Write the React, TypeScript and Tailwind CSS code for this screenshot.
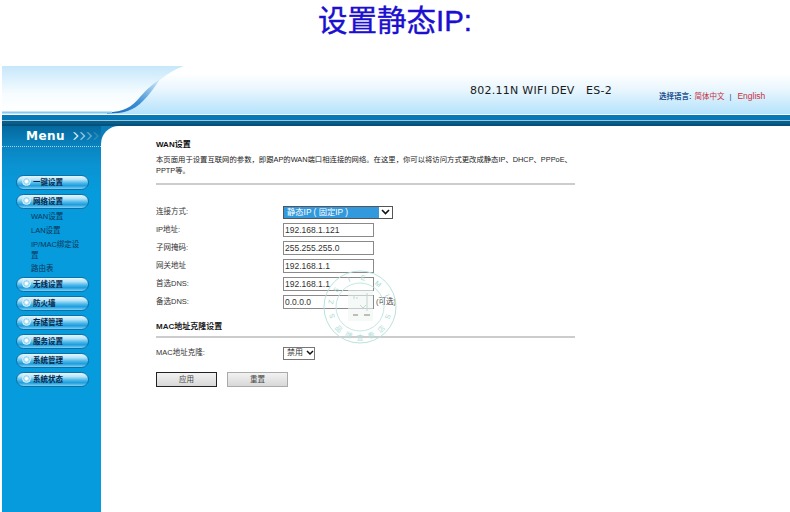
const sans = "font-['Liberation_Sans','Noto_Sans_CJK_SC',sans-serif]";

function NavPill({ label }: { label: string }) {
  return (
    <div className="relative flex h-[15px] w-[73px] items-center rounded-full border border-[#0b6fa8] bg-[linear-gradient(to_bottom,#e8f7fe_0%,#b4e3f8_28%,#4ab8ea_55%,#1c9cdd_75%,#7fd0f2_100%)] pl-[16px]">
      <span className="absolute left-[5px] top-[1px] h-[9px] w-[9px] rounded-full border border-[#d9f2fc] bg-[radial-gradient(circle,#ffffff_20%,#8fd4f3_55%,#d4f0fb_100%)]" />
      <span className="text-[7.5px] font-bold leading-none text-[#07264a]">{label}</span>
    </div>
  );
}

function SubLink({ children }: { children: React.ReactNode }) {
  return <div className="pl-[15px] text-[7.5px] leading-[11px] text-[#0a3558]">{children}</div>;
}

function Sidebar() {
  return (
    <aside className="flex w-[99px] shrink-0 flex-col bg-[linear-gradient(to_bottom,#06699f_0px,#0a86c2_22px,#0a93d2_40px,#069bdc_64px)]">
      <div className="flex h-[20px] items-center gap-[8px] pl-[24px] font-['DejaVu_Sans',sans-serif] text-[12px] font-bold tracking-[0.5px] text-white">
        Menu
        <svg width="29" height="10" viewBox="0 0 29 10">
          {[1, 0.7, 0.45, 0.2].map((opacity, i) => (
            <path key={i} d={`M${i * 7} 1l4 4-4 4h2l4-4-4-4z`} fill="#cfeaf6" opacity={opacity} />
          ))}
        </svg>
      </div>
      <div className="border-t border-dotted border-[#9fd6ee]" />
      <div className="flex flex-col pl-[14px] pt-[28px]">
        <div className="flex flex-col gap-[4px]">
          <NavPill label="一键设置" />
          <NavPill label="网络设置" />
        </div>
        <div className="flex w-[68px] flex-col gap-[3px] pb-[3px] pt-[2px]">
          <SubLink>WAN设置</SubLink>
          <SubLink>LAN设置</SubLink>
          <div className="-mb-[1px]"><SubLink>IP/MAC绑定设置</SubLink></div>
          <SubLink>路由表</SubLink>
        </div>
        <div className="flex flex-col gap-[4px]">
          {["无线设置", "防火墙", "存储管理", "服务设置", "系统管理", "系统状态"].map((item) => (
            <NavPill key={item} label={item} />
          ))}
        </div>
      </div>
    </aside>
  );
}

function Row({ label, children }: { label: string; children: React.ReactNode }) {
  return (
    <div className="flex h-[18px] items-center">
      <label className="w-[127px] text-[7.5px] text-[#333]">{label}</label>
      {children}
    </div>
  );
}

function Field({ value }: { value: string }) {
  return (
    <input
      readOnly
      value={value}
      className={`h-[14px] w-[91px] border border-[#8a8a8a] bg-transparent px-[1px] text-[8.5px] text-[#333] outline-none ${sans}`}
    />
  );
}

const ringLetters: [string, number][] = [
  ["S", -108], ["Z", -80], ["5", -54], ["I", -22], ["E", 6], ["M", 38], ["I", 67], ["S", 109],
];
const ringChars: [string, number][] = [
  ["品", 44], ["牌", 22], ["查", 0], ["看", -22], ["店", -44],
];

function Stamp() {
  return (
    <svg className="pointer-events-none absolute left-[322px] top-[270px]" width="76" height="76" viewBox="0 0 76 76">
      <circle cx="38" cy="37" r="36" fill="none" stroke="#b9e3dc" strokeWidth="1" />
      <circle cx="38" cy="37" r="24" fill="none" stroke="#c4e8e2" strokeWidth="1" />
      {ringLetters.map(([ch, angle], i) => (
        <text key={i} x="38" y="10" textAnchor="middle" fontSize="7" fill="#9fd8cf" transform={`rotate(${angle} 38 37)`} className="font-['Liberation_Sans',sans-serif]">
          {ch}
        </text>
      ))}
      {ringChars.map(([ch, angle]) => (
        <text key={ch} x="38" y="70" textAnchor="middle" fontSize="7" fill="#b3e0d9" transform={`rotate(${angle} 38 37)`} className="font-['Noto_Sans_CJK_SC',sans-serif]">
          {ch}
        </text>
      ))}
      <rect x="26" y="20" width="25" height="31" fill="#eef5f3" opacity="0.6" />
      <path d="M32 25v4M35 27v2M45 23v18M38 35l3 3 3-3" stroke="#c4d4d2" strokeWidth="1" fill="none" />
      <path d="M31 45h5M42 45h6" stroke="#c0bdb4" strokeWidth="2" />
    </svg>
  );
}

export default function App() {
  return (
    <div className={`relative h-[512px] w-[790px] overflow-hidden bg-white ${sans}`}>
      <h1 className="flex h-[66px] items-start justify-center pt-[2px] text-[29.5px] leading-[38px] text-[#1b0fd0] [-webkit-text-stroke:0.4px_#1b0fd0]">
        设置静态IP:
      </h1>

      <div className="pl-[2px]">
        <header className="relative flex h-[48px] bg-[linear-gradient(to_bottom,#ffffff_15%,#e8f6fe_50%,#b4e2fb_100%)]">
          <svg className="absolute left-0 top-0" width="190" height="48" viewBox="0 0 190 48">
            <defs>
              <linearGradient id="left-fill" x1="0" y1="0" x2="0" y2="1">
                <stop offset="0" stopColor="#c6e7fb" />
                <stop offset="0.6" stopColor="#f6fcff" />
                <stop offset="1" stopColor="#ffffff" />
              </linearGradient>
              <linearGradient id="swoosh" x1="0" y1="1" x2="1" y2="0">
                <stop offset="0" stopColor="#1668bd" />
                <stop offset="0.45" stopColor="#3d8fd4" />
                <stop offset="1" stopColor="#d4ecfa" />
              </linearGradient>
            </defs>
            <path d="M0 0H182C165 6 150 20 138 32C128 42 120 46 108 46H0Z" fill="url(#left-fill)" />
            <path d="M105 46.5C122 46 130 41 138 31C145 23 151 18 158 13C153 21 147 29 141 35C131 45 122 47.5 105 47.5Z" fill="url(#swoosh)" />
            <rect x="0" y="45.5" width="110" height="1.5" fill="#8cc6ec" />
          </svg>
          <div className="absolute left-[468px] top-[18px] whitespace-pre font-['DejaVu_Sans',sans-serif] text-[11px] leading-[14px] tracking-[0.27px] text-[#1a1a1a]">
            802.11N WIFI DEV   ES-2
          </div>
          <div className="absolute left-[657px] top-[25px] flex items-center text-[7.5px] leading-[11px]">
            <span className="font-bold text-[#1d4f8f]">选择语言:</span>
            <span className="ml-[3px] text-[#c8303a]">简体中文</span>
            <span className="ml-[5px] text-[#1d4f8f]">|</span>
            <span className="ml-[6px] text-[8.5px] text-[#c8303a]">English</span>
          </div>
        </header>

        <div className="flex h-[12px] flex-col">
          <div className="h-[1px] bg-white" />
          <div className="h-[5px] bg-[#0778b6]" />
          <div className="h-[1px] bg-[#9ac4d8]" />
          <div className="h-[3px] bg-[#085f8c]" />
          <div className="h-[2px] bg-[#06527c]" />
        </div>

        <div className="flex h-[386px]">
          <Sidebar />
          <div className="bg-[#0a7fb9]">
            <main className="h-full w-[689px] rounded-tl-[18px] bg-white pl-[55px] pr-[215px] pt-[13px]">
              <h2 className="text-[8px] font-bold leading-[12px] text-[#111]">WAN设置</h2>
              <p className="mt-[3px] text-[7.35px] leading-[11px] text-[#222]">
                本页面用于设置互联网的参数，即跟AP的WAN端口相连接的网络。在这里，你可以将访问方式更改成静态IP、DHCP、PPPoE、PPTP等。
              </p>
              <div className="mt-[7px] h-[2px] bg-[#cccccc]" />

              <div className="mt-[18px] flex flex-col">
                <Row label="连接方式:">
                  <div className="flex h-[13px] w-[110px] border border-[#555] bg-white">
                    <div className="flex-1 bg-[#3399dd] pl-[3px] text-[8.3px] leading-[11px] text-white">静态IP ( 固定IP )</div>
                    <svg className="mx-[2px] my-auto" width="9" height="6" viewBox="0 0 9 6">
                      <path d="M1 1l3.5 3.5L8 1" fill="none" stroke="#111" strokeWidth="1.6" />
                    </svg>
                  </div>
                </Row>
                <Row label="IP地址:"><Field value="192.168.1.121" /></Row>
                <Row label="子网掩码:"><Field value="255.255.255.0" /></Row>
                <Row label="网关地址"><Field value="192.168.1.1" /></Row>
                <Row label="首选DNS:"><Field value="192.168.1.1" /></Row>
                <Row label="备选DNS:">
                  <Field value="0.0.0.0" />
                  <span className="ml-[2px] text-[7.5px] text-[#444]">(可选)</span>
                </Row>
              </div>

              <h3 className="mt-[10px] text-[8px] font-bold leading-[12px] text-[#222]">MAC地址克隆设置</h3>
              <div className="mt-[3px] h-[2px] bg-[#cccccc]" />

              <div className="mt-[6px]">
                <Row label="MAC地址克隆:">
                  <div className="flex h-[13px] w-[32px] items-center whitespace-nowrap border border-[#777] bg-white pl-[3px] text-[8px] text-[#333]">
                    禁用
                    <svg className="ml-[3px]" width="8" height="6" viewBox="0 0 8 6">
                      <path d="M1 1l3 3 3-3" fill="none" stroke="#111" strokeWidth="1.5" />
                    </svg>
                  </div>
                </Row>
              </div>

              <div className="mt-[10px] flex gap-[10px]">
                <button className="h-[15px] w-[61px] border border-[#222] bg-[linear-gradient(to_bottom,#f2f2f2,#d8d8d8)] text-[7.5px] leading-none text-[#444]">应用</button>
                <button className="h-[15px] w-[61px] border border-[#aaa] bg-[linear-gradient(to_bottom,#f2f2f2,#d8d8d8)] text-[7.5px] leading-none text-[#444]">重置</button>
              </div>
            </main>
          </div>
        </div>
      </div>

      <Stamp />
    </div>
  );
}
